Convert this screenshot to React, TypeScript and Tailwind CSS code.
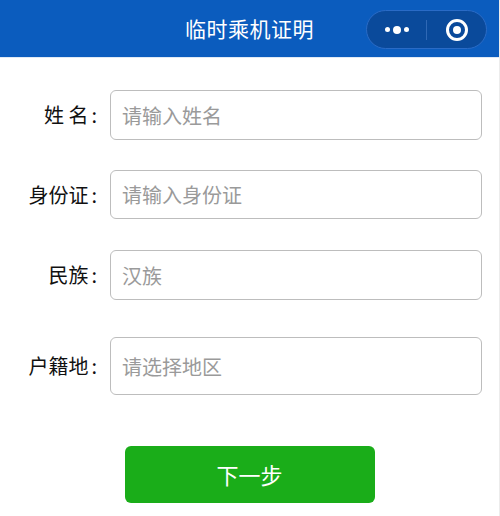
import { useState } from "react";

const fields = [
  { key: "name", label: "姓 名", placeholder: "请输入姓名", wrap: "mt-[32px]", h: "h-[50px]" },
  { key: "idcard", label: "身份证", placeholder: "请输入身份证", wrap: "mt-[30px]", h: "h-[49px]" },
  { key: "nation", label: "民族", placeholder: "汉族", wrap: "mt-[31px]", h: "h-[50px]" },
  { key: "region", label: "户籍地", placeholder: "请选择地区", wrap: "mt-[37px]", h: "h-[58px]" },
];

function App() {
  const [form, setForm] = useState<Record<string, string>>({
    name: "",
    idcard: "",
    nation: "",
    region: "",
  });

  return (
    <div className="w-[500px] h-[516px] bg-white overflow-hidden font-['Noto_Sans_CJK_SC','Noto_Sans',sans-serif] border-r border-r-[#ececec]">
      <div className="relative h-[58px] bg-[#0b5cbe] flex items-center justify-center border-b border-b-[#dfe9f5]">
        <h1 className="text-[21px] text-white tracking-[0.5px]">临时乘机证明</h1>
        <div className="absolute right-[12px] top-[10px] w-[121px] h-[39px] rounded-full bg-[#0a4a9b] border border-[#2a6bc6] flex items-center">
          <div className="flex-1 flex items-center justify-center gap-[3px]">
            <span className="w-[5px] h-[5px] rounded-full bg-white" />
            <span className="w-[8px] h-[8px] rounded-full bg-white" />
            <span className="w-[5px] h-[5px] rounded-full bg-white" />
          </div>
          <div className="w-px h-[20px] bg-[#2f68b5]" />
          <div className="flex-1 flex items-center justify-center">
            <span className="w-[22px] h-[22px] rounded-full border-[3px] border-white flex items-center justify-center">
              <span className="w-[8px] h-[8px] rounded-full bg-white" />
            </span>
          </div>
        </div>
      </div>

      <div className="flex flex-col">
        {fields.map((f) => (
          <div key={f.key} className={`flex items-center ${f.wrap}`}>
            <label className="w-[98px] text-right text-[20px] text-[#111] leading-none whitespace-nowrap">
              {f.label}
              <span className="ml-[3px] mr-[1px]">:</span>
            </label>
            <input
              className={`ml-[12px] w-[372px] ${f.h} rounded-[6px] border border-[#bdbdbd] px-[11px] text-[20px] text-[#333] placeholder:text-[#9a9a9a] outline-none`}
              placeholder={f.placeholder}
              value={form[f.key]}
              onChange={(e) => setForm((prev) => ({ ...prev, [f.key]: e.target.value }))}
            />
          </div>
        ))}
      </div>

      <div className="flex justify-center mt-[51px]">
        <button className="w-[250px] h-[57px] rounded-[6px] bg-[#1aad19] text-white text-[22px]">
          下一步
        </button>
      </div>
    </div>
  );
}

export default App;
